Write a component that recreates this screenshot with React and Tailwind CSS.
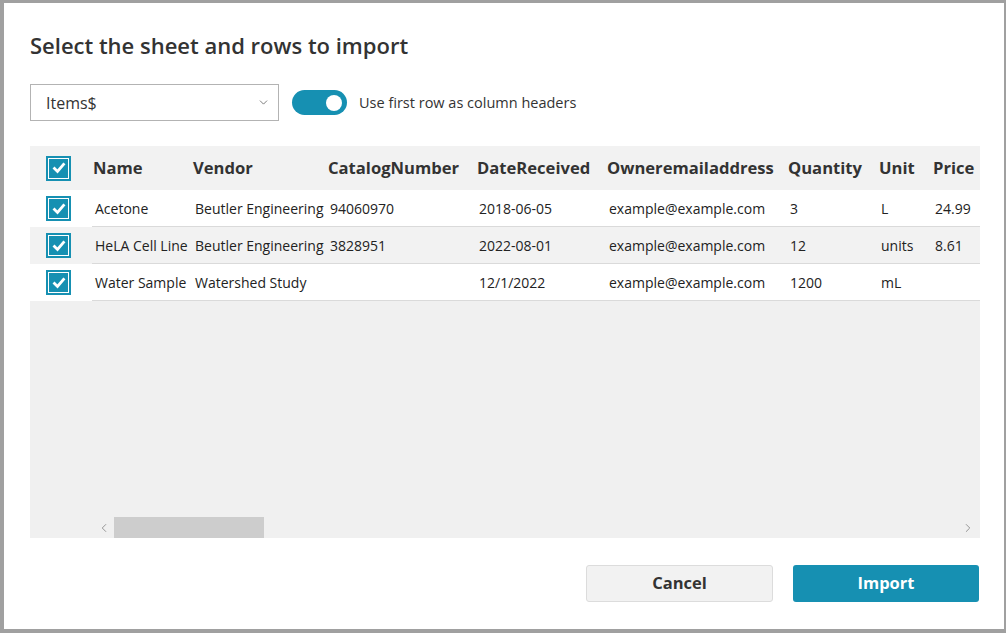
import React from 'react';
import { ChevronDown, ChevronLeft, ChevronRight } from 'lucide-react';

const cols = [
  { key: 'name', label: 'Name', w: 'w-[100px]' },
  { key: 'vendor', label: 'Vendor', w: 'w-[135px]' },
  { key: 'catalog', label: 'CatalogNumber', w: 'w-[149px]' },
  { key: 'date', label: 'DateReceived', w: 'w-[130px]' },
  { key: 'owner', label: 'Owneremailaddress', w: 'w-[181px]' },
  { key: 'qty', label: 'Quantity', w: 'w-[91px]' },
  { key: 'unit', label: 'Unit', w: 'w-[54px]' },
  { key: 'price', label: 'Price', w: 'w-[47px]' },
];

const rows = [
  { name: 'Acetone', vendor: 'Beutler Engineering', catalog: '94060970', date: '2018-06-05', owner: 'example@example.com', qty: '3', unit: 'L', price: '24.99' },
  { name: 'HeLA Cell Line', vendor: 'Beutler Engineering', catalog: '3828951', date: '2022-08-01', owner: 'example@example.com', qty: '12', unit: 'units', price: '8.61' },
  { name: 'Water Sample', vendor: 'Watershed Study', catalog: '', date: '12/1/2022', owner: 'example@example.com', qty: '1200', unit: 'mL', price: '' },
];

function Check() {
  return (
    <div className="w-[25px] h-[25px] bg-[#1690b2] p-[2px]">
      <div className="w-full h-full border border-white flex items-center justify-center">
        <svg viewBox="0 0 16 16" className="w-[16px] h-[16px]" fill="none" stroke="white" strokeWidth="2.8" strokeLinecap="square" strokeLinejoin="miter">
          <path d="M3.5 8.5l3 3 6-7" />
        </svg>
      </div>
    </div>
  );
}

export default function App() {
  return (
    <div className="w-[1006px] h-[633px] bg-white border-[#a0a0a0] border-l-4 border-t-[3px] border-r-2 border-b-4 text-[#333]" style={{ fontFamily: '"Open Sans", "Noto Sans", sans-serif' }}>
      <div className="pl-[26px] pr-[22px] pt-[29px]">
        <h1 className="text-[22px] font-semibold leading-[26px] text-[#333]">Select the sheet and rows to import</h1>

        <div className="flex items-center mt-[26px]">
          <div className="w-[249px] h-[37px] border border-[#b3b3b3] flex items-center justify-between pl-[15px] pr-[8px]">
            <span className="text-[16px] text-[#333]">Items$</span>
            <ChevronDown size={13} strokeWidth={1.4} className="text-[#555]" />
          </div>
          <div className="ml-[13px] w-[55px] h-[25px] rounded-full bg-[#1690b2] flex items-center justify-end pr-[5px]">
            <div className="w-[16px] h-[16px] rounded-full bg-white" />
          </div>
          <span className="ml-[12px] text-[14.5px] text-[#333]">Use first row as column headers</span>
        </div>

        <div className="mt-[25px] w-[950px] h-[392px] bg-[#f0f0f0] flex flex-col">
          <div className="flex h-[44px] bg-[#f2f2f2] items-center">
            <div className="w-[62px] pl-[16px]"><Check /></div>
            {cols.map(c => (
              <div key={c.key} className={`${c.w} pl-[1px] text-[16.6px] font-bold whitespace-nowrap text-[#333]`}>{c.label}</div>
            ))}
          </div>
          {rows.map((r, i) => (
            <div key={i} className={`flex h-[37px] items-center ${i === 1 ? 'bg-[#f2f2f2]' : 'bg-white'}`}>
              <div className="w-[62px] h-full pl-[16px] flex items-center"><Check /></div>
              <div className="flex flex-1 h-full items-center border-b border-[#dadada]">
                {cols.map(c => (
                  <div key={c.key} className={`${c.w} pl-[3px] text-[14px] whitespace-nowrap overflow-hidden text-[#222]`}>{r[c.key]}</div>
                ))}
              </div>
            </div>
          ))}
          <div className="flex-1" />
          <div className="h-[21px] flex items-center">
            <div className="w-[84px] flex justify-end pr-[3px]">
              <ChevronLeft size={14} strokeWidth={1.5} className="text-[#888]" />
            </div>
            <div className="w-[150px] h-full bg-[#cdcdcd]" />
            <div className="flex-1 flex justify-end pr-[5px]">
              <ChevronRight size={14} strokeWidth={1.5} className="text-[#888]" />
            </div>
          </div>
        </div>

        <div className="flex justify-end mt-[27px] pr-[3px] gap-[20px]">
          <button className="w-[187px] h-[37px] rounded-[3px] bg-[#f2f2f2] border border-[#dcdcdc] text-[16.5px] font-bold text-[#333]">Cancel</button>
          <button className="w-[186px] h-[37px] rounded-[3px] bg-[#1690b2] text-[16.5px] font-bold text-white">Import</button>
        </div>
      </div>
    </div>
  );
}
